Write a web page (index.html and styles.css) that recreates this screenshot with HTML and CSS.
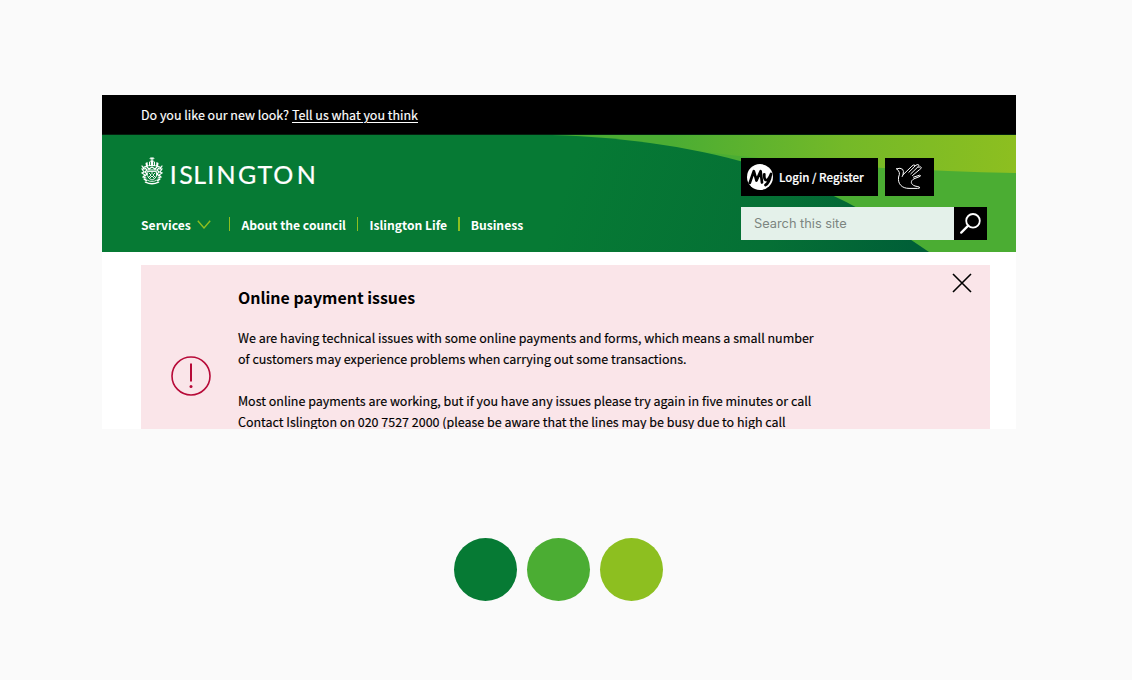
FILE: index.html
```
<!DOCTYPE html>
<html lang="en">
<head>
<meta charset="utf-8">
<title>Islington</title>
<link rel="stylesheet" href="styles.css">
</head>
<body>
<main class="page">
  <section class="site">
    <div class="topbar"><span class="ask">Do you like our new look?</span><a class="feedback">Tell us what you think</a></div>
    <header class="hero">
      <svg class="hero-art" viewBox="0 0 914 117" preserveAspectRatio="none" aria-hidden="true">
        <defs>
          <linearGradient id="lime" gradientUnits="userSpaceOnUse" x1="570" y1="0" x2="914" y2="0"><stop offset="0" stop-color="#4bad33"/><stop offset=".5" stop-color="#74b928"/><stop offset="1" stop-color="#8dbf20"/></linearGradient>
          <linearGradient id="deep" gradientUnits="userSpaceOnUse" x1="480" y1="0" x2="812" y2="110"><stop offset="0" stop-color="#067a34"/><stop offset=".6" stop-color="#057035"/><stop offset="1" stop-color="#005f37"/></linearGradient>
        </defs>
        <path fill="#4bad33" d="M0 0H914V117H0Z"/>
        <path fill="url(#lime)" d="M460 0H914V38Q735 34 595 16Z"/>
        <path fill="url(#deep)" d="M0 0H450C550 3 640 20 715 53Q775 80 827 117H0Z"/>
      </svg>
      <div class="left">
        <div class="brand">
          <svg class="crest" viewBox="0 0 22 28" fill="none" stroke="#fff" stroke-linecap="round" aria-hidden="true">
            <path stroke-width=".8" d="M11 0V4M9 1.5H13M9.7.5L12.3 2.8M12.3.5L9.7 2.8"/>
            <path fill="#fff" stroke="none" d="M8 5L11 3L14 5V9H8ZM4.5 6L6.5 5L7 9L5 10ZM15 9L15.5 5L17.5 6L17 10Z"/>
            <path stroke="#067a34" stroke-width=".8" d="M9.5 5V8M12.5 5V8"/>
            <path stroke-width="1.2" d="M3 10Q11 7 19 10M1 9L3 12L1 12L3 15L1 16L4 18L2 20L5 21M21 9L19 12L21 12L19 15L21 16L18 18L20 20L17 21M4 11L6 13L4 15L6 17L4 19M18 11L16 13L18 15L16 17L18 19M6 10L8 12L11 10L14 12L16 10M7 13H15"/>
            <path stroke-width=".9" d="M6.5 14.5H15.5V19Q14.5 22 11 23Q7.5 22 6.5 19ZM8 16L10 18L8 20M14 16L12 18L14 20M11 15V17M9 21L11 19L13 21"/>
            <path stroke-width="1.5" d="M3.2 22L5.5 23.5M18.8 22L16.5 23.5M4.5 25.2Q11 28.5 17.5 25.2"/>
            <path stroke-width=".8" d="M6.5 23.2Q11 26 15.5 23.2"/>
          </svg>
          <svg class="wordmark" viewBox="0 0 146 28"><text class="wordmark-text" x="-1.2 8.3 22.2 36.2 45.6 67 86.6 102.3 125.7" y="23">ISLINGTON</text></svg>
        </div>
        <nav class="nav">
          <a class="n1">Services</a>
          <svg class="chevron" viewBox="0 0 14 9"><path d="M.8.8L7 8L13.2.8" fill="none" stroke="#8dbf20" stroke-width="1.4"/></svg>
          <i class="bar bar-first"></i><a class="n2">About the council</a>
          <i class="bar"></i><a class="n3">Islington Life</a>
          <i class="bar"></i><a class="n4">Business</a>
        </nav>
      </div>
      <div class="tools">
        <div class="buttons">
          <a class="login">
            <svg class="my" viewBox="0 0 26 26" fill="none" aria-hidden="true"><circle cx="13" cy="13" r="13" fill="#fff"/><path stroke="#000" stroke-width="2.7" stroke-linecap="round" stroke-linejoin="round" d="M2.8 18.8L6.8 7.2L9.5 16.5L13.6 7.2L15 18.5M17.3 10.3Q17 16.3 19.5 16.2Q21.8 15.5 24 10M23.8 10.5Q22.5 18.8 18.5 21"/></svg>
            <span class="login-text">Login / Register</span>
          </a>
          <a class="hand">
            <svg class="hand-icon" viewBox="0 0 26 25" fill="none" stroke="#fff" stroke-width="1" stroke-linecap="round" stroke-linejoin="round"><path d="M.6 4.8Q2.5 6 3.3 8.5Q3.8 10 2.6 13C1.5 20 6 24.4 13 24.4H21.5Q24.6 24.3 23.5 23.2Q22.5 22.7 19 22C14.5 20.5 14.2 16.8 18 14.8L24.2 12.3Q25 11.3 23.5 11.2L17.5 13.2M.6 4.8Q4.5 3.3 6.7 5.4Q8 7 7 10.8L15.8 2.2Q17.5.4 18.8 1.2Q19.3 2 18 3.2L12.8 8.3M18.7 2.2Q21.7-.4 22.8 1Q23.2 1.7 22 2.8L14.8 9.8M22.6 3.2Q25.4 2 25.3 3.7Q25.2 4.6 23.5 5.7L16.5 11.5M7 10.8L6.2 12.5"/></svg>
          </a>
        </div>
        <div class="search">
          <span class="field"><span class="placeholder">Search this site</span></span>
          <span class="go"><svg class="glass" viewBox="0 0 21 21" fill="none" stroke="#fff" stroke-width="1.8" stroke-linecap="round"><circle cx="13" cy="7.8" r="6.8"/><path d="M8.2 12.6L1.2 19.6" stroke-width="2.2"/></svg></span>
        </div>
      </div>
    </header>
    <article class="alert">
      <div class="sign"><svg class="warn" viewBox="0 0 40 40"><circle cx="20" cy="20" r="19" fill="none" stroke="#b70a38" stroke-width="1.6"/><path d="M20 7.5V25.5" stroke="#b70a38" stroke-width="2"/><circle cx="20" cy="30.4" r="1.5" fill="#b70a38"/></svg></div>
      <div class="message">
        <h1 class="title"><span class="t0">Online payment issues</span></h1>
        <p class="copy"><span class="t1">We are having technical issues with some online payments and forms, which means a small number</span><br><span class="t2">of customers may experience problems when carrying out some transactions.</span></p>
        <p class="copy"><span class="t3">Most online payments are working, but if you have any issues please try again in five minutes or call</span><br><span class="t4">Contact Islington on 020 7527 2000 (please be aware that the lines may be busy due to high call</span></p>
      </div>
      <svg class="close" viewBox="0 0 20 20"><path d="M1 1L19 19M19 1L1 19" stroke="#000" stroke-width="1.6"/></svg>
    </article>
  </section>
  <section class="palette"><i class="dot dark"></i><i class="dot mid"></i><i class="dot light"></i></section>
</main>
</body>
</html>
```
FILE: styles.css
```
* { box-sizing: border-box; }
body { margin: 0; background: #fafafa; font-family: "Noto Sans CJK SC", "Noto Sans", sans-serif; font-size: 12.47px; color: #000; }
.page { width: 1132px; height: 680px; padding: 95px 0 0 102px; overflow: hidden; }
.site { width: 914px; height: 334px; overflow: hidden; background: #fff; }
svg { display: block; flex: none; }
span, a { white-space: nowrap; }
.topbar { height: 40px; background: #000; color: #fff; display: flex; align-items: center; padding-left: 39px; gap: 3px; border-bottom: 1px solid #04200f; -webkit-text-stroke: .15px; }
.feedback { text-decoration: underline; text-underline-offset: 2px; text-decoration-thickness: 1px; }
.hero { position: relative; height: 117px; display: flex; justify-content: space-between; padding: 0 29.5px 0 39px; color: #fff; }
.hero-art { position: absolute; inset: 0; width: 914px; height: 117px; }
.left, .tools { position: relative; }
.brand { display: flex; padding-top: 22px; gap: 8px; }
.crest { width: 22px; height: 28px; }
.wordmark { width: 146px; height: 28px; overflow: visible; margin-top: 4px; }
.wordmark-text { font: 400 25px Lato, sans-serif; fill: #fff; stroke: #fff; stroke-width: .2px; }
.nav { display: flex; align-items: center; margin-top: 25px; height: 20px; font-size: 12.15px; font-weight: 700; }
.chevron { width: 14px; height: 9px; margin-left: 6.5px; }
.bar { width: 1.5px; height: 14px; margin: 0 11px; background: #8dbf20; }
.bar-first { margin-left: 17.5px; }
.tools { width: 246px; padding-top: 23px; }
.buttons { display: flex; gap: 7.5px; }
.login { width: 137px; height: 37.5px; background: #000; display: flex; align-items: center; padding-left: 6.5px; gap: 6px; font-size: 11.5px; font-weight: 500; -webkit-text-stroke: .2px; }
.my { width: 26px; height: 26px; }
.hand { width: 48.5px; height: 37.5px; background: #000; display: flex; align-items: center; justify-content: center; }
.hand-icon { width: 26px; height: 25px; }
.search { display: flex; height: 33px; margin-top: 11.5px; }
.field { width: 213px; background: #e4f1ea; color: #7c8580; display: flex; align-items: center; padding-left: 13.5px; font: 12.8px Inter, sans-serif; }
.go { width: 33px; background: #000; display: flex; align-items: center; justify-content: center; }
.glass { width: 21px; height: 21px; }
.alert { margin: 13px 26.5px 0 39px; height: 164px; background: #fae5e9; display: flex; }
.sign { width: 97px; padding: 91px 0 0 30px; }
.warn { width: 40px; height: 40px; }
.message { width: 700px; padding-top: 17px; -webkit-text-stroke: .15px; }
.title { margin: 0 0 16px; font-size: 15.95px; line-height: 30px; font-weight: 700; -webkit-text-stroke: 0; }
.copy { margin: 0 0 21px; line-height: 20.85px; }
.close { width: 20px; height: 20px; margin: 8px 0 0 14px; }
.palette { display: flex; gap: 10px; padding: 108.5px 0 0 352px; }
.dot { width: 63px; height: 63px; border-radius: 50%; }
.dark { background: #067a34; }
.mid { background: #4bad33; }
.light { background: #8dbf20; }
```
